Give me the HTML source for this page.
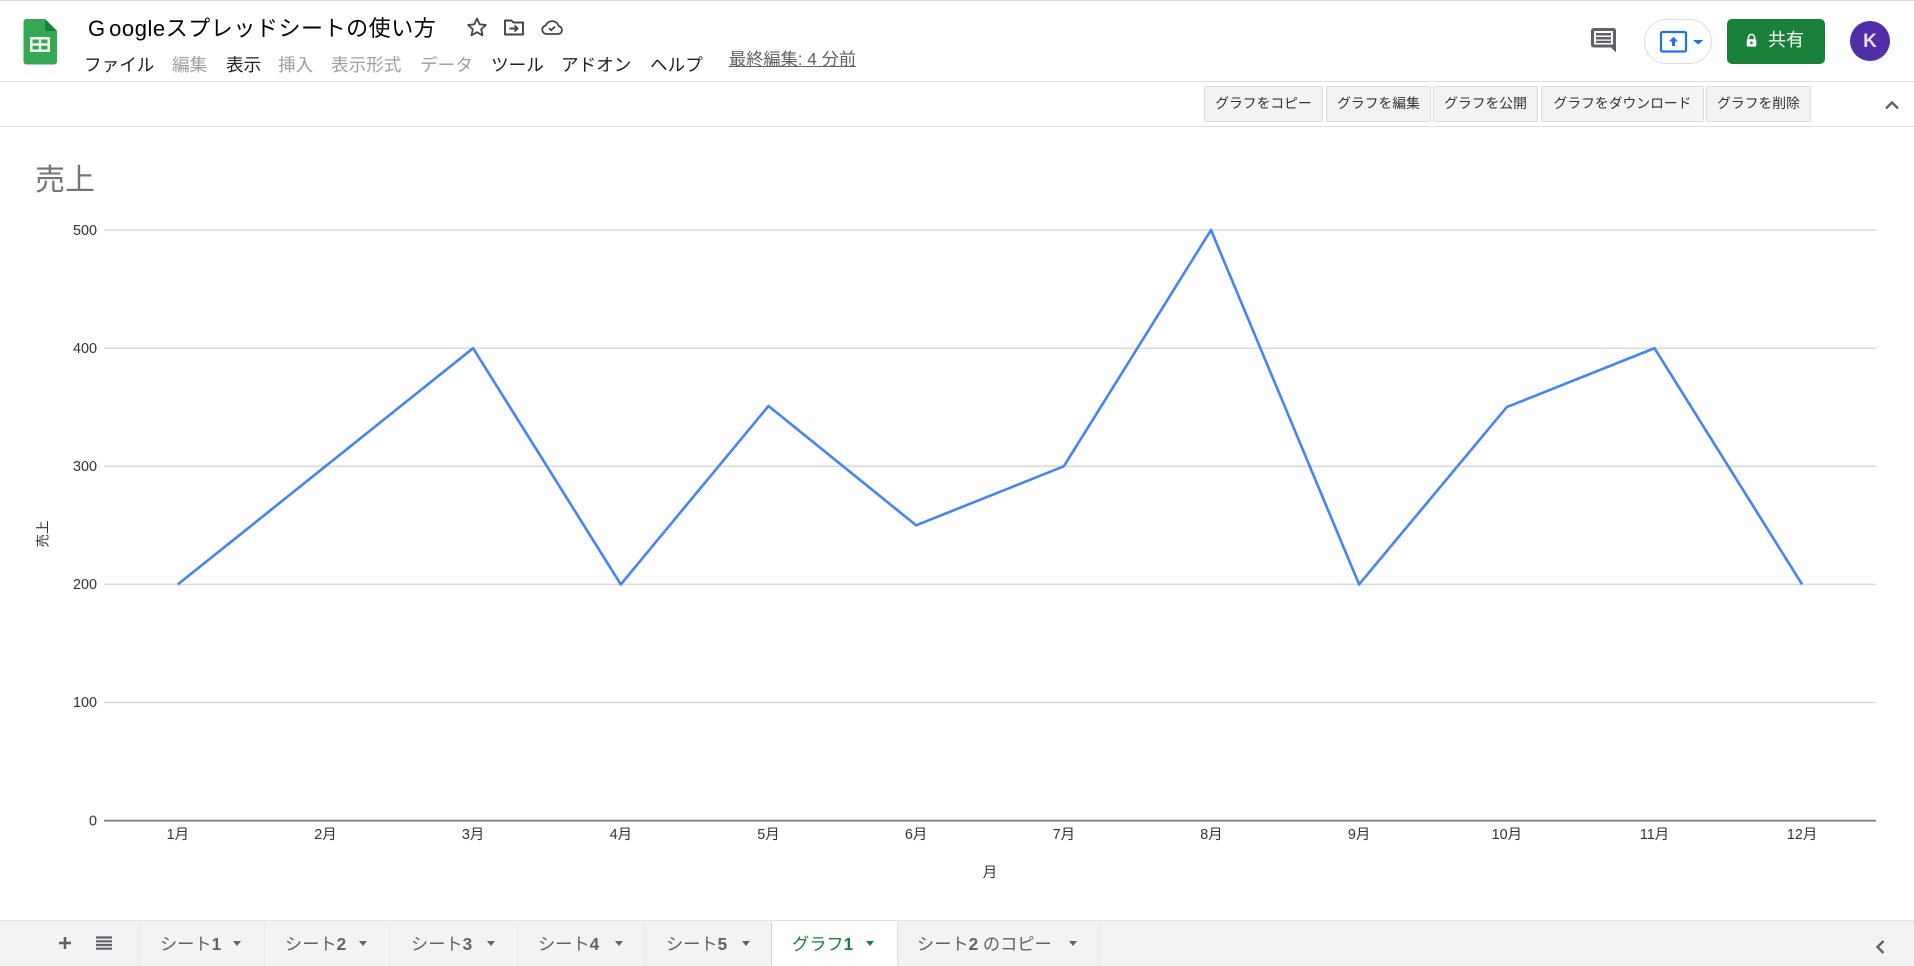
<!DOCTYPE html>
<html lang="ja">
<head>
<meta charset="utf-8">
<title>Googleスプレッドシートの使い方</title>
<style>
html,body{margin:0;padding:0;background:#fff;width:1914px;height:966px;overflow:hidden}
body{position:relative;font-family:"Liberation Sans","Noto Sans CJK JP",sans-serif;color:#202124}
.a{position:absolute;white-space:nowrap}
.m{top:52px;font-size:17.600px;line-height:26px;color:#202124}
.d{color:#9aa0a6}
.b{position:absolute;top:86px;height:34px;box-sizing:content-box;background:#f1f3f4;border:1px solid #dcdcdc;border-radius:2px;font-size:13.800px;line-height:34px;text-align:center;color:#333;white-space:nowrap}
.t{position:absolute;top:920px;height:46px;border-right:1px solid #e8eaed;box-sizing:border-box}
.tx{position:absolute;top:931px;font-size:17.200px;line-height:26px;color:#5f6368;white-space:nowrap}
.c{position:absolute;top:941px;width:0;height:0;border-left:4.500px solid transparent;border-right:4.500px solid transparent;border-top:5px solid #5f6368}
svg text{font-family:"Liberation Sans","Noto Sans CJK JP",sans-serif;font-size:14.400px;fill:#333}
</style>
</head>
<body>
<div class="a" style="left:0;top:0;width:1914px;height:1px;background:#dadce0"></div>
<div class="a" style="left:0;top:81px;width:1914px;height:1px;background:#dadce0"></div>
<div class="a" style="left:0;top:126px;width:1914px;height:1px;background:#dadce0"></div>

<svg class="a" style="left:23px;top:19px" width="35" height="46" viewBox="0 0 35 46">
<path d="M3.500 0H22L34 12V42.500A3 3 0 0 1 31 45.500H3.500A3 3 0 0 1 .5 42.500V3A3 3 0 0 1 3.500 0Z" fill="#34a853"/>
<path d="M22 0L34 12H24.500A2.500 2.500 0 0 1 22 9.500Z" fill="#188038"/>
<path d="M7 18H27V33H7ZM9.500 20.500V24.300H15.800V20.500ZM18.200 20.500V24.300H24.500V20.500ZM9.500 26.700V30.500H15.800V26.700ZM18.200 26.700V30.500H24.500V26.700Z" fill="#f1f8f3" fill-rule="evenodd"/>
</svg>

<div class="a" style="left:88px;top:13px;font-size:22px;line-height:32px;color:#000;letter-spacing:.55px"><span style="letter-spacing:4px">G</span>oogleスプレッドシートの使い方</div>

<svg class="a" style="left:465px;top:15px" width="24" height="24" viewBox="0 0 24 24" fill="none" stroke="#444" stroke-width="1.800" stroke-linejoin="round"><path d="M12 3.500l2.600 5.800 6.300.7-4.700 4.200 1.300 6.200-5.500-3.200-5.500 3.200 1.300-6.200L3.100 10l6.300-.7z"/></svg>
<svg class="a" style="left:502px;top:15px" width="24" height="24" viewBox="0 0 24 24" fill="none" stroke="#444" stroke-width="1.900"><path d="M3 5.500H9.500L11.500 7.500H21V19.500H3Z" stroke-linejoin="round"/><path d="M7.500 13.500H15M12.500 10.500L15.500 13.500L12.500 16.500" stroke-width="1.900"/></svg>
<svg class="a" style="left:540px;top:15px" width="24" height="24" viewBox="0 0 24 24" fill="none" stroke="#444" stroke-width="1.800"><path d="M6.500 19H18A4 4 0 0 0 18.800 11.100 7 7 0 0 0 5.600 10.500 4.300 4.300 0 0 0 6.500 19Z"/><path d="M9 13.200L11.200 15.300L15 11.500"/></svg>

<div class="a m" style="left:84px">ファイル</div>
<div class="a m d" style="left:172px">編集</div>
<div class="a m" style="left:226px">表示</div>
<div class="a m d" style="left:278px">挿入</div>
<div class="a m d" style="left:331px">表示形式</div>
<div class="a m d" style="left:420px">データ</div>
<div class="a m" style="left:491px">ツール</div>
<div class="a m" style="left:561px">アドオン</div>
<div class="a m" style="left:650px">ヘルプ</div>
<div class="a" style="left:729px;top:46px;font-size:17.200px;line-height:26px;color:#5f6368;text-decoration:underline">最終編集: 4 分前</div>

<svg class="a" style="left:1590px;top:27px" width="28" height="27" viewBox="0 0 28 27"><path d="M3.500 1H23.500A2.500 2.500 0 0 1 26 3.500V25.500L21 20.500H3.500A2.500 2.500 0 0 1 1 18V3.500A2.500 2.500 0 0 1 3.500 1Z" fill="#5f6368"/><path d="M4 4H23V17.500H4Z" fill="#fff"/><path d="M6 6H21V8.500H6ZM6 10H21V12.500H6ZM6 13.700H21V16H6Z" fill="#5f6368"/></svg>

<div class="a" style="left:1644px;top:19px;width:68px;height:45px;box-sizing:border-box;border:1px solid #dadce0;border-radius:23px;background:#fff"></div>
<svg class="a" style="left:1659px;top:30px" width="48" height="24" viewBox="0 0 48 24"><rect x="2" y="2" width="25" height="19.500" rx="1.500" fill="none" stroke="#1a73e8" stroke-width="2.200"/><path d="M14.500 6.800L19 11.500H16V16H13V11.500H10Z" fill="#1a73e8"/><path d="M34 10H44.500L39.200 14.500Z" fill="#1a73e8"/></svg>

<div class="a" style="left:1727px;top:19px;width:98px;height:45px;background:#188038;border-radius:5px"></div>
<svg class="a" style="left:1745px;top:33px" width="13" height="15" viewBox="0 0 15 17"><path d="M4 7V5A3.500 3.500 0 0 1 11 5V7" fill="none" stroke="#fff" stroke-width="1.800"/><rect x="2" y="7" width="11" height="8.500" rx="1.200" fill="#fff"/><circle cx="7.500" cy="11.200" r="1.500" fill="#188038"/></svg>
<div class="a" style="left:1768px;top:27px;font-size:18px;line-height:26px;color:#fff">共有</div>
<div class="a" style="left:1850px;top:21px;width:40px;height:40px;border-radius:50%;background:#512da8;color:#e6def5;font-size:19px;font-weight:bold;line-height:42px;text-align:center">K</div>

<div class="b" style="left:1204px;width:117px">グラフをコピー</div>
<div class="b" style="left:1326px;width:103px">グラフを編集</div>
<div class="b" style="left:1433px;width:103px">グラフを公開</div>
<div class="b" style="left:1541px;width:161px">グラフをダウンロード</div>
<div class="b" style="left:1706px;width:103px">グラフを削除</div>
<svg class="a" style="left:1884px;top:99px" width="16" height="12" viewBox="0 0 16 12"><path d="M2 9.500L8 3.500L14 9.500" fill="none" stroke="#5f6368" stroke-width="2.400"/></svg>

<div class="a" style="left:35px;top:160px;font-size:30px;line-height:42px;color:#757575">売上</div>

<svg class="a" style="left:0;top:0" width="1914" height="966" viewBox="0 0 1914 966">
<g stroke="#d9d9d9" stroke-width="1.500" fill="none">
<path d="M104 230H1876M104 348.200H1876M104 466.300H1876M104 584.400H1876M104 702.500H1876"/>
</g>
<path d="M104 820.700H1876" stroke="#808080" stroke-width="1.800" fill="none"/>
<path d="M177.800 584.400L473.100 348.200L620.800 584.400L768.500 406L916.100 525.300L1063.800 466.300L1211 230L1359.100 584.400L1506.800 407.100L1654.500 348.200L1802.100 584.400" fill="none" stroke="#4285f4" stroke-width="2.600" stroke-linejoin="round"/>
<g text-anchor="end">
<text x="97" y="235">500</text>
<text x="97" y="353">400</text>
<text x="97" y="471">300</text>
<text x="97" y="589">200</text>
<text x="97" y="707">100</text>
<text x="97" y="825.500">0</text>
</g>
<g text-anchor="middle">
<text x="177.800" y="839">1月</text>
<text x="325.500" y="839">2月</text>
<text x="473.100" y="839">3月</text>
<text x="620.800" y="839">4月</text>
<text x="768.500" y="839">5月</text>
<text x="916.100" y="839">6月</text>
<text x="1063.800" y="839">7月</text>
<text x="1211.500" y="839">8月</text>
<text x="1359.100" y="839">9月</text>
<text x="1506.800" y="839">10月</text>
<text x="1654.500" y="839">11月</text>
<text x="1802.100" y="839">12月</text>
<text x="990" y="877">月</text>
<text transform="translate(47.500 534) rotate(-90)" x="0" y="0" style="font-size:13.500px">売上</text>
</g>
</svg>

<div class="a" style="left:0;top:920px;width:1914px;height:46px;background:#f1f3f4;box-shadow:inset 0 1px 0 #e4e6e8"></div>
<svg class="a" style="left:57px;top:935px" width="16" height="16" viewBox="0 0 16 16"><path d="M8 2V14M2 8H14" stroke="#5f6368" stroke-width="2.600"/></svg>
<svg class="a" style="left:95px;top:936px" width="18" height="14" viewBox="0 0 18 14"><path d="M1 1.500H17M1 5.300H17M1 9H17M1 12.700H17" stroke="#5f6368" stroke-width="2.200"/></svg>

<div class="t" style="left:139px;width:1px;background:#e8eaed"></div>
<div class="t" style="left:140px;width:125px"></div>
<div class="t" style="left:265px;width:125px"></div>
<div class="t" style="left:390px;width:128px"></div>
<div class="t" style="left:518px;width:127px"></div>
<div class="t" style="left:645px;width:127px"></div>
<div class="a" style="left:772px;top:921px;width:125px;height:45px;background:#fff;box-shadow:0 1px 2px rgba(60,64,67,.3)"></div>
<div class="t" style="left:897px;width:203px"></div>

<div class="tx" style="left:160px">シート<b>1</b></div><div class="c" style="left:232.500px"></div>
<div class="tx" style="left:285px">シート<b>2</b></div><div class="c" style="left:358.500px"></div>
<div class="tx" style="left:411px">シート<b>3</b></div><div class="c" style="left:486.500px"></div>
<div class="tx" style="left:538px">シート<b>4</b></div><div class="c" style="left:614.500px"></div>
<div class="tx" style="left:666px">シート<b>5</b></div><div class="c" style="left:741.500px"></div>
<div class="tx" style="left:792px;color:#188038">グラフ<b>1</b></div><div class="c" style="left:865.500px;border-top-color:#188038"></div>
<div class="tx" style="left:917px">シート<b>2</b> のコピー</div><div class="c" style="left:1068.500px"></div>
<svg class="a" style="left:1874px;top:939px" width="12" height="16" viewBox="0 0 12 16"><path d="M9.500 2L3.500 8L9.500 14" fill="none" stroke="#5f6368" stroke-width="2.400"/></svg>
</body>
</html>
